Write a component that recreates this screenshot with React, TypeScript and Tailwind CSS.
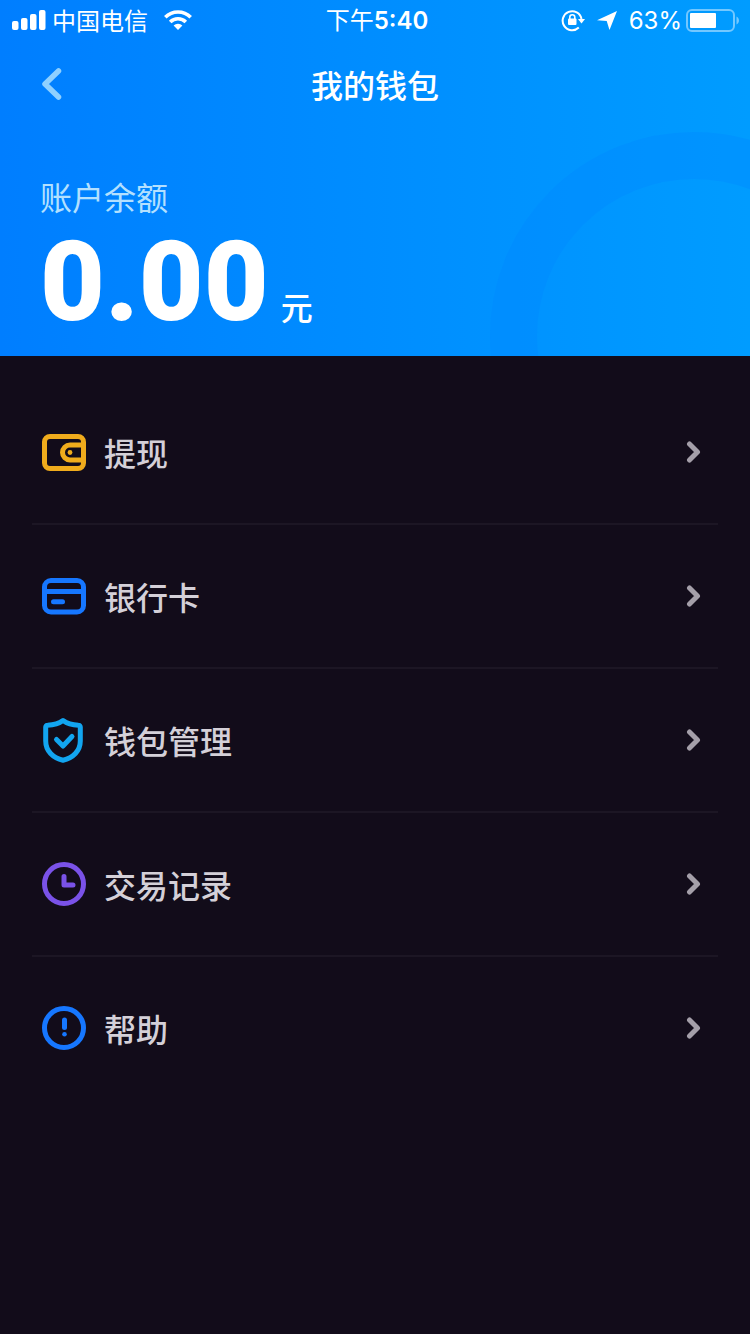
import React from 'react'

const menuItems = [
  { label: '提现', icon: <WalletIcon /> },
  { label: '银行卡', icon: <CardIcon /> },
  { label: '钱包管理', icon: <ShieldIcon /> },
  { label: '交易记录', icon: <ClockIcon /> },
  { label: '帮助', icon: <HelpIcon /> },
]

function WalletIcon() {
  return (
    <svg className="h-12 w-12" viewBox="0 0 48 48" fill="none" stroke="#f0ac1c" strokeWidth="5">
      <rect x="4.5" y="8.5" width="39" height="32" rx="5.5" />
      <path d="M42 17H30a7.500 7.500 0 0 0 0 15H42" />
      <circle cx="30" cy="24.5" r="2.4" fill="#f0ac1c" stroke="none" />
    </svg>
  )
}

function CardIcon() {
  return (
    <svg className="h-12 w-12" viewBox="0 0 48 48" fill="none" stroke="#1677ff" strokeWidth="5">
      <rect x="4.5" y="8.5" width="39" height="31.5" rx="6.5" />
      <path d="M5 19.5h38" />
      <path d="M13.5 29.7h9" strokeLinecap="round" />
    </svg>
  )
}

function ShieldIcon() {
  return (
    <svg className="h-12 w-12" viewBox="0 0 48 48" fill="none" stroke="#12a5f0" strokeWidth="5" strokeLinecap="round" strokeLinejoin="round">
      <path d="M23 4.5C19 7.5 14 9 7.500 9.200a1.800 1.800 0 0 0-1.800 1.800v14C5.700 35 13 42 23 44.200 33 42 40.300 35 40.300 25V11a1.800 1.800 0 0 0-1.800-1.800C32 9 27 7.500 23 4.500z" />
      <path d="M16.500 23.500l6.500 6.500 9-9.500" />
    </svg>
  )
}

function ClockIcon() {
  return (
    <svg className="h-12 w-12" viewBox="0 0 48 48" fill="none" stroke="#7a52e8" strokeWidth="5" strokeLinecap="round" strokeLinejoin="round">
      <circle cx="24" cy="24" r="19.500" />
      <path d="M24 16.500v8.500h9" />
    </svg>
  )
}

function HelpIcon() {
  return (
    <svg className="h-12 w-12" viewBox="0 0 48 48" fill="none" stroke="#1677ff" strokeWidth="5" strokeLinecap="round">
      <circle cx="24" cy="24" r="19.500" />
      <path d="M24.500 16v7.500" />
      <circle cx="24.500" cy="30.200" r="2.300" fill="#1677ff" stroke="none" />
    </svg>
  )
}

function StatusBar() {
  return (
    <div className="grid h-10 grid-cols-[1fr_auto_1fr] items-center pl-3 pr-2 text-2xl">
      <div className="flex items-center">
        <svg className="h-5 w-[34px]" viewBox="0 0 34 20" fill="#fff">
          <rect x="0" y="11" width="6.500" height="9" rx="2" />
          <rect x="9" y="8" width="6.500" height="12" rx="2" />
          <rect x="18" y="4" width="6.500" height="16" rx="2" />
          <rect x="27" y="0" width="6.500" height="20" rx="2" />
        </svg>
        <span className="ml-1.5">中国电信</span>
        <svg className="ml-4 h-5 w-7" viewBox="0 0 28 20" fill="none" stroke="#fff" strokeWidth="3.600">
          <path d="M1.300 7.200a18 18 0 0 1 25.400 0" />
          <path d="M6.200 12a11 11 0 0 1 15.600 0" />
          <path d="M14 20l-4.400-4.500a6.200 6.200 0 0 1 8.800 0z" fill="#fff" stroke="none" />
        </svg>
      </div>
      <span>
        下午<span className="font-['Inter',sans-serif] font-semibold">5:40</span>
      </span>
      <div className="flex items-center justify-end">
        <svg className="h-6 w-6" viewBox="0 0 24 24" fill="none" stroke="#fff" strokeWidth="2">
          <path d="M17.800 19.500A9.500 9.500 0 1 1 20.500 11" />
          <path d="M17 11h7l-3.500 4.500z" fill="#fff" stroke="none" />
          <rect x="7" y="10.500" width="8.500" height="6.500" rx="1" fill="#fff" stroke="none" />
          <path d="M8.800 11V9.200a2.500 2.500 0 0 1 5 0V11" strokeWidth="1.600" />
        </svg>
        <svg className="ml-3 h-5 w-5" viewBox="0 0 20 20" fill="#fff">
          <path d="M20 1L0 10.300l9.700.7L12.500 20z" />
        </svg>
        <span className="ml-3">
          <span className="font-['Inter',sans-serif]">63%</span>
        </span>
        <svg className="ml-1 h-6 w-14" viewBox="0 0 56 24" fill="none">
          <rect x="1" y="2" width="47" height="21" rx="5" stroke="#fff" strokeOpacity=".45" strokeWidth="2" />
          <rect x="4" y="5" width="26" height="15" rx="1" fill="#fff" />
          <path d="M50.500 8.500v8c3.300-1.500 3.300-6.500 0-8z" fill="#fff" fillOpacity=".45" />
        </svg>
      </div>
    </div>
  )
}

export default function App() {
  return (
    <div className="min-h-screen bg-[#120c1a] font-['Noto_Sans_CJK_SC',sans-serif] text-white">
      <header className="relative overflow-hidden bg-linear-to-r from-[#007eff] to-[#009cff]">
        {/* Decorative ring */}
        <div className="absolute -right-[148px] top-[132px] h-[408px] w-[408px] rounded-full border-[47px] border-[#0088ff]/35" />

        <div className="relative">
          <StatusBar />

          <div className="grid h-[88px] grid-cols-[1fr_auto_1fr] items-center px-10">
            <button type="button" aria-label="返回" className="flex h-12 w-6 items-center">
              <svg className="h-8 w-6" viewBox="0 0 24 32" fill="none" stroke="#8fd0ff" strokeWidth="5.500" strokeLinecap="round" strokeLinejoin="round">
                <path d="M18.500 3L5 16l13.500 13" />
              </svg>
            </button>
            <h1 className="text-[32px] leading-10 font-medium">我的钱包</h1>
          </div>

          <section className="h-[228px] px-10 pt-12">
            <p className="text-[32px] leading-10 text-[#b3e0ff]">账户余额</p>
            <p className="mt-4 flex items-baseline gap-3">
              <span className="font-['Roboto',sans-serif] text-[112px] leading-[100px] font-black">0.00</span>
              <span className="text-[32px] leading-10 font-medium">元</span>
            </p>
          </section>
        </div>
      </header>

      <nav className="px-8 pt-[25px]">
        <ul className="divide-y-2 divide-[#1c1624]">
          {menuItems.map((item) => (
            <li key={item.label}>
              <a href="#" className="flex h-[142px] items-center pl-2 pr-4 text-[#d4d0d8]">
                {item.icon}
                <span className="ml-4 flex-1 text-[32px] leading-10 font-medium">{item.label}</span>
                <svg className="h-6 w-4" viewBox="0 0 16 24" fill="none" stroke="#a49fa9" strokeWidth="5" strokeLinecap="round" strokeLinejoin="round">
                  <path d="M3.500 4l8 8-8 8" />
                </svg>
              </a>
            </li>
          ))}
        </ul>
      </nav>
    </div>
  )
}
